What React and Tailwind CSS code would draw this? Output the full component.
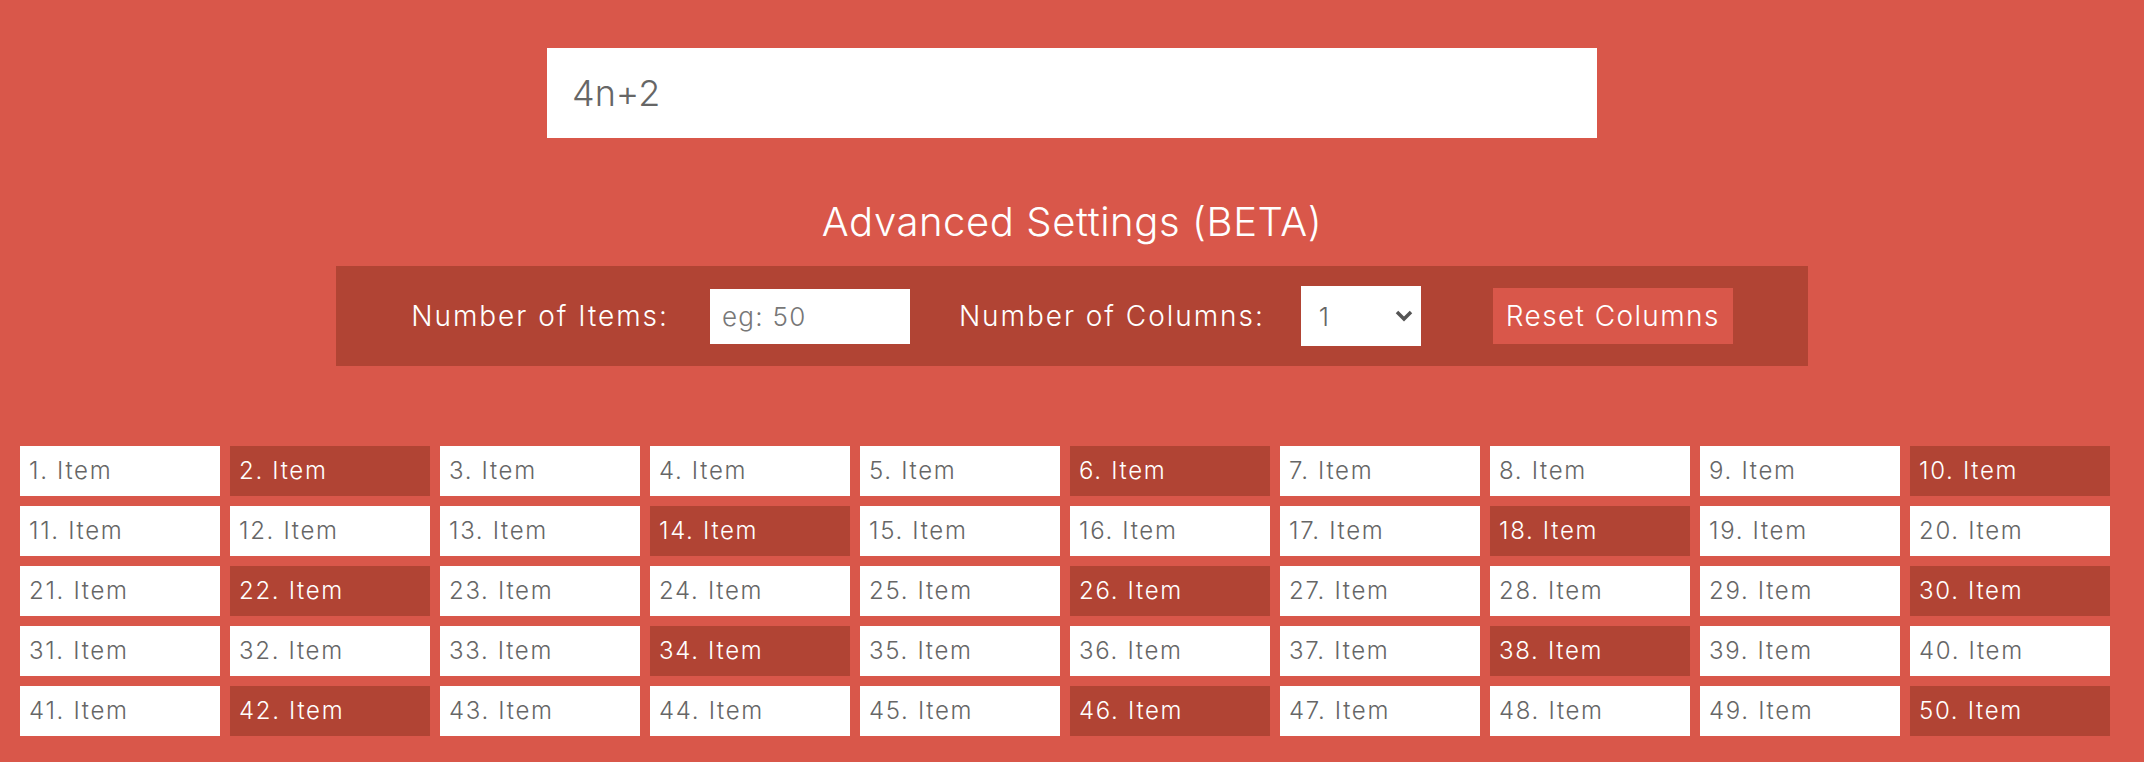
import { useState } from "react";

const items = Array.from({ length: 50 }, (_, i) => i + 1);

export default function App() {
  const [formula, setFormula] = useState("4n+2");
  const [cols, setCols] = useState("1");

  return (
    <div
      className="min-h-[762px] bg-[#d9574a] pt-[48px] pb-[26px] font-light"
      style={{ fontFamily: "Inter, 'Noto Sans', sans-serif" }}
    >
      <input
        value={formula}
        onChange={(e) => setFormula(e.target.value)}
        className="block mx-auto w-[1050px] h-[90px] bg-white px-[25px] text-[36px] text-[#666] outline-none"
      />

      <h2 className="mt-[60px] mb-[20px] text-center text-[40px] leading-[48px] tracking-[0.015em] text-white">
        Advanced Settings (BETA)
      </h2>

      <div className="flex justify-center">
        <div className="flex items-center h-[100px] px-[75px] bg-[#b14434] text-white text-[28px] tracking-[0.07em]">
          <label>Number of Items:</label>
          <input
            placeholder="eg: 50"
            className="ml-[41px] w-[200px] h-[55px] bg-white px-[12px] text-[26px] tracking-[0.05em] text-[#666] placeholder:text-[#777] outline-none"
          />
          <label className="ml-[49px]">Number of Columns:</label>
          <div className="relative ml-[36px] w-[120px] h-[60px] bg-white">
            <select
              value={cols}
              onChange={(e) => setCols(e.target.value)}
              className="w-full h-full appearance-none bg-transparent pl-[18px] text-[26px] text-[#666] outline-none"
            >
              {[1, 2, 3, 4, 5, 6, 7, 8, 9, 10].map((n) => (
                <option key={n} value={n}>
                  {n}
                </option>
              ))}
            </select>
            <svg
              className="absolute right-[8px] top-[24px] pointer-events-none"
              width="18"
              height="12"
              viewBox="0 0 18 12"
            >
              <path d="M2 2 L9 9 L16 2" fill="none" stroke="#555" strokeWidth="3.5" />
            </svg>
          </div>
          <button className="ml-[72px] w-[240px] h-[56px] bg-[#d9574a] text-white text-[28px] tracking-[0.05em]">
            Reset Columns
          </button>
        </div>
      </div>

      <div className="mt-[80px] px-[20px] grid grid-cols-[repeat(10,200px)] gap-[10px]">
        {items.map((n) => {
          const on = n % 4 === 2;
          return (
            <div
              key={n}
              className={
                on
                  ? "h-[50px] flex items-center px-[9px] text-[24px] tracking-[0.07em] bg-[#b14434] text-white"
                  : "h-[50px] flex items-center px-[9px] text-[24px] tracking-[0.07em] bg-white text-[#666]"
              }
            >
              {n}. Item
            </div>
          );
        })}
      </div>
    </div>
  );
}
